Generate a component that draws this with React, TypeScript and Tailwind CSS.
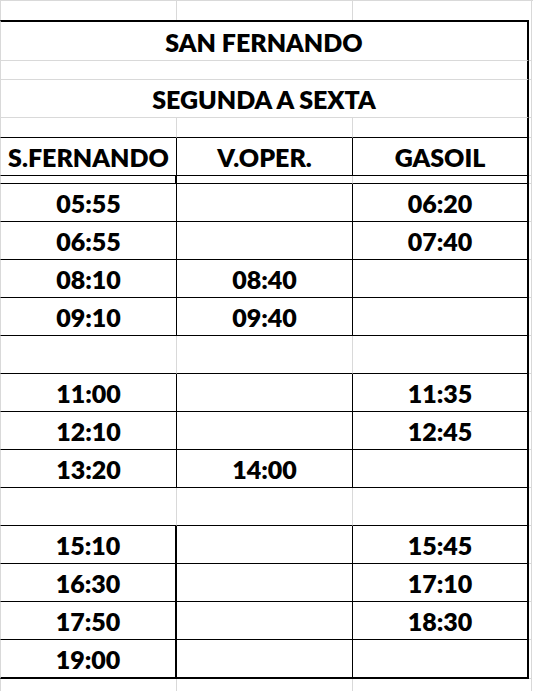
import React from "react";

type Body = { a: string; b: string; c: string; blank?: boolean; thick?: boolean; last?: boolean };

const rows: Body[] = [
  { a: "05:55", b: "", c: "06:20" },
  { a: "06:55", b: "", c: "07:40" },
  { a: "08:10", b: "08:40", c: "" },
  { a: "09:10", b: "09:40", c: "" },
  { a: "", b: "", c: "", blank: true },
  { a: "11:00", b: "", c: "11:35" },
  { a: "12:10", b: "", c: "12:45" },
  { a: "13:20", b: "14:00", c: "" },
  { a: "", b: "", c: "", blank: true },
  { a: "15:10", b: "", c: "15:45", thick: true },
  { a: "16:30", b: "", c: "17:10", thick: true },
  { a: "17:50", b: "", c: "18:30", thick: true },
  { a: "19:00", b: "", c: "", thick: true, last: true },
];

const txt = "flex items-center justify-center pt-[2px] text-[25px] font-extrabold text-black leading-none";

function BodyRow({ r }: { r: Body }) {
  const hb = r.last ? "h-[39px] border-b-2" : "h-[38px] border-b";
  const c1r = r.blank
    ? "border-r border-r-[#d9d9d9]"
    : r.thick
    ? "border-r-2 border-r-black"
    : "border-r border-r-black";
  const c2r = r.blank ? "border-r border-r-[#d9d9d9]" : "border-r border-r-black";
  return (
    <div className="flex">
      <div className={`${hb} ${c1r} border-b-black w-[177px] border-l border-l-[#d9d9d9] ${txt}`}>{r.a}</div>
      <div className={`${hb} ${c2r} border-b-black w-[176px] ${txt}`}>{r.b}</div>
      <div className={`${hb} border-r-2 border-r-black border-b-black w-[176px] ${txt}`}>{r.c}</div>
      <div className={`${r.last ? "h-[39px]" : "h-[38px]"} w-[3px] border-r border-b border-[#d9d9d9]`} />
    </div>
  );
}

export default function App() {
  return (
    <div
      className="w-[533px] h-[691px] bg-white overflow-hidden"
      style={{ fontFamily: "Lato, 'Open Sans', sans-serif" }}
    >
      {/* top strip above table */}
      <div className="flex h-[20px] border-t border-[#d9d9d9]">
        <div className="w-[177px] border-l border-r border-[#d9d9d9]" />
        <div className="w-[176px] border-r border-[#d9d9d9]" />
        <div className="w-[176px]" />
        <div className="w-[3px] border-r border-[#d9d9d9]" />
      </div>

      {/* SAN FERNANDO */}
      <div className="flex">
        <div className={`h-[41px] w-[529px] border-t-2 border-t-black border-r-2 border-r-black border-b border-b-[#d9d9d9] border-l border-l-[#d9d9d9] ${txt}`}>
          SAN FERNANDO
        </div>
        <div className="h-[41px] w-[3px] border-r border-b border-[#d9d9d9]" />
      </div>
      {/* gap */}
      <div className="flex">
        <div className="h-[19px] w-[529px] border-r-2 border-r-black border-b border-b-[#d9d9d9] border-l border-l-[#d9d9d9]" />
        <div className="h-[19px] w-[3px] border-r border-b border-[#d9d9d9]" />
      </div>
      {/* SEGUNDA A SEXTA */}
      <div className="flex">
        <div className={`h-[38px] w-[529px] border-r-2 border-r-black border-b border-b-[#d9d9d9] border-l border-l-[#d9d9d9] ${txt}`}>
          SEGUNDA A SEXTA
        </div>
        <div className="h-[38px] w-[3px] border-r border-b border-[#d9d9d9]" />
      </div>
      {/* gap with gray verticals */}
      <div className="flex">
        <div className="h-[20px] w-[177px] border-l border-l-[#d9d9d9] border-r border-r-[#d9d9d9] border-b border-b-black" />
        <div className="h-[20px] w-[176px] border-r border-r-[#d9d9d9] border-b border-b-black" />
        <div className="h-[20px] w-[176px] border-r-2 border-r-black border-b border-b-black" />
        <div className="h-[20px] w-[3px] border-r border-b border-[#d9d9d9]" />
      </div>
      {/* column headers */}
      <div className="flex">
        <div className={`h-[38px] w-[177px] border-l border-l-[#d9d9d9] border-r border-r-black border-b border-b-black ${txt}`}>S.FERNANDO</div>
        <div className={`h-[38px] w-[176px] border-r border-r-black border-b border-b-black ${txt}`}>V.OPER.</div>
        <div className={`h-[38px] w-[176px] border-r-2 border-r-black border-b border-b-black ${txt}`}>GASOIL</div>
        <div className="h-[38px] w-[3px] border-r border-b border-[#d9d9d9]" />
      </div>
      {/* spacer */}
      <div className="flex">
        <div className="h-[8px] w-[177px] border-l border-l-[#d9d9d9] border-r-2 border-r-black border-b border-b-black" />
        <div className="h-[8px] w-[176px] border-r border-r-[#d9d9d9] border-b border-b-black" />
        <div className="h-[8px] w-[176px] border-r-2 border-r-black border-b border-b-black" />
        <div className="h-[8px] w-[3px] border-r border-b border-[#d9d9d9]" />
      </div>

      {rows.map((r, i) => (
        <BodyRow key={i} r={r} />
      ))}

      {/* below table */}
      <div className="flex h-[12px]">
        <div className="w-[177px] border-l border-r border-[#d9d9d9]" />
        <div className="w-[176px] border-r border-[#d9d9d9]" />
        <div className="w-[176px]" />
        <div className="w-[3px] border-r border-[#d9d9d9]" />
      </div>
    </div>
  );
}
